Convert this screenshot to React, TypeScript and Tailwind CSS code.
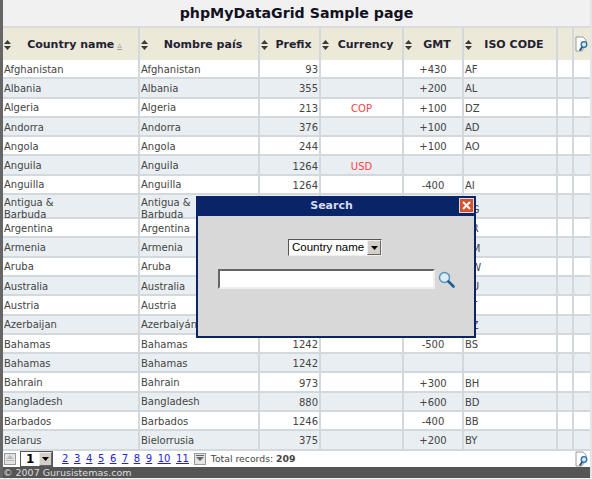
const rows = [
  ['Afghanistan', 'Afghanistan', '93', '', '+430', 'AF'],
  ['Albania', 'Albania', '355', '', '+200', 'AL'],
  ['Algeria', 'Algeria', '213', 'COP', '+100', 'DZ'],
  ['Andorra', 'Andorra', '376', '', '+100', 'AD'],
  ['Angola', 'Angola', '244', '', '+100', 'AO'],
  ['Anguila', 'Anguila', '1264', 'USD', '', ''],
  ['Anguilla', 'Anguilla', '1264', '', '-400', 'AI'],
  ['Antigua & Barbuda', 'Antigua & Barbuda', '1268', '', '-400', 'AG'],
  ['Argentina', 'Argentina', '54', '', '-300', 'AR'],
  ['Armenia', 'Armenia', '374', '', '+400', 'AM'],
  ['Aruba', 'Aruba', '297', '', '-400', 'AW'],
  ['Australia', 'Australia', '61', '', '+1000', 'AU'],
  ['Austria', 'Austria', '43', '', '+100', 'AT'],
  ['Azerbaijan', 'Azerbaiyán', '994', '', '+400', 'AZ'],
  ['Bahamas', 'Bahamas', '1242', '', '-500', 'BS'],
  ['Bahamas', 'Bahamas', '1242', '', '', ''],
  ['Bahrain', 'Bahrain', '973', '', '+300', 'BH'],
  ['Bangladesh', 'Bangladesh', '880', '', '+600', 'BD'],
  ['Barbados', 'Barbados', '1246', '', '-400', 'BB'],
  ['Belarus', 'Bielorrusia', '375', '', '+200', 'BY'],
];

const pages = ['2', '3', '4', '5', '6', '7', '8', '9', '10', '11'];

function SortArrows() {
  return (
    <svg width="7" height="10" viewBox="0 0 7 10" className="shrink-0">
      <path d="M3.5 0 7 4H0z M0 6h7L3.5 10z" fill="#3a3a3a" />
    </svg>
  );
}

function SearchDoc() {
  return (
    <svg width="14" height="16" viewBox="0 0 14 16">
      <path d="M1 1h7l3 3v5l-4 6H1z" fill="#fff" stroke="#9a9a9a" />
      <circle cx="9" cy="8.5" r="2.8" fill="#cfe6f5" stroke="#2b6ea3" strokeWidth="1.3" />
      <path d="M7.2 11 4.8 14.5" stroke="#1d4f7c" strokeWidth="2" />
    </svg>
  );
}

function PageArrow({ down }: { down?: boolean }) {
  return (
    <div className="flex h-[12px] w-[12px] items-center justify-center border border-[#9a9a9a] bg-[#e4e4e4]">
      <svg width="8" height="7" viewBox="0 0 8 7">
        {down ? (
          <path d="M0 0h8v1H0zM0 2h8L4 6z" fill="#666" />
        ) : (
          <path d="M4 0 8 4H0zM0 5h8v1H0z" fill="#bbb" />
        )}
      </svg>
    </div>
  );
}

function SelectArrow({ className }: { className: string }) {
  return (
    <span className={`flex h-full items-center justify-center border border-[#eee] border-b-[#666] border-r-[#666] bg-[#d4d0c8] ${className}`}>
      <svg width="7" height="4" viewBox="0 0 7 4">
        <path d="M0 0h7L3.5 4z" fill="#000" />
      </svg>
    </span>
  );
}

function HeaderCell({ label, arrow }: { label: string; arrow?: boolean }) {
  return (
    <div className="flex items-center gap-[2px] border-r-2 border-[#d3d8dc] pl-[1px] pr-[2px] pt-[2px]">
      <SortArrows />
      <span className="flex-1 whitespace-nowrap text-center text-[11px] font-bold text-[#222233]">
        {label}
        {arrow && <span className="ml-[3px] text-[9px] font-normal text-[#999] underline">▵</span>}
      </span>
    </div>
  );
}

const rowGrid = 'grid grid-cols-[137px_120px_61px_83px_60px_94px_16px_16px]';
const cell = 'border-r-2 border-[#d3d8dc] px-[1px] pt-[2px] flex items-center';

export default function App() {
  return (
    <div className="relative h-[479px] w-[592px] overflow-hidden bg-[#f1f1f1] font-['DejaVu_Sans',sans-serif] text-[10px] text-[#444]">
      <div className="flex h-[478px] flex-col border-l-[3px] border-r-[2px] border-[#666] border-r-[#e4e4e4]">
        <h1 className="flex h-[28px] shrink-0 items-center justify-center border-b-2 border-[#d9dcdf] pt-[1px] text-[14.2px] font-bold text-[#111122]">
          phpMyDataGrid Sample page
        </h1>

        <div className={`${rowGrid} h-[32px] shrink-0 bg-[#ece9d8]`}>
          <HeaderCell label="Country name" arrow />
          <HeaderCell label="Nombre país" />
          <HeaderCell label="Prefix" />
          <HeaderCell label="Currency" />
          <HeaderCell label="GMT" />
          <HeaderCell label="ISO CODE" />
          <div className="border-r-2 border-[#d3d8dc]" />
          <div className="flex items-center justify-center">
            <SearchDoc />
          </div>
        </div>

        <div className="flex shrink-0 flex-col">
          {rows.map((r, i) => (
            <div
              key={i}
              className={`${rowGrid} shrink-0 border-b-2 border-[#d3d8dc] ${i === 7 ? 'h-[24px]' : 'h-[19.3px]'} ${i % 2 ? 'bg-[#e9eef2]' : 'bg-white'}`}
            >
              <div className={`${cell} pr-[60px] leading-[12px]`}>{r[0]}</div>
              <div className={`${cell} pr-[50px] leading-[12px]`}>{r[1]}</div>
              <div className={`${cell} justify-end`}>{r[2]}</div>
              <div className={`${cell} justify-center text-[#ff4040]`}>{r[3]}</div>
              <div className={`${cell} justify-center`}>{r[4]}</div>
              <div className={cell}>{r[5]}</div>
              <div className={cell} />
              <div />
            </div>
          ))}
        </div>

        <div className="flex min-h-0 flex-1 items-center bg-white">
          <div className="ml-[1px]">
            <PageArrow />
          </div>
          <div className="ml-[4px] flex h-[16px] w-[33px] items-center justify-between border border-[#555] bg-white pl-[5px] text-[12px] font-bold leading-none text-black">
            1
            <SelectArrow className="w-[13px]" />
          </div>
          <div className="ml-[8px] flex gap-[3.6px] text-[#2222dd] underline">
            {pages.map((p) => (
              <a key={p} href="#" className="px-[1px]">
                {p}
              </a>
            ))}
          </div>
          <div className="ml-[4px]">
            <PageArrow down />
          </div>
          <span className="ml-[5px] text-[9.3px]">
            Total records: <b>209</b>
          </span>
          <div className="ml-auto mr-[1px] flex">
            <SearchDoc />
          </div>
        </div>
        <div className="flex h-[11px] shrink-0 items-center bg-[#555] text-[9.5px] leading-none text-[#ddd]">
          © 2007 Gurusistemas.com
        </div>
      </div>

      <div className="absolute left-[196px] top-[196px] flex h-[142px] w-[280px] flex-col border-2 border-[#0a2468] bg-[#d8d8d8]">
        <div className="relative flex h-[18px] shrink-0 items-center justify-center bg-[#0a2468] pb-[2px] pr-[9px] text-[11px] font-bold text-[#d5dcf0]">
          Search
          <div className="absolute right-0 top-0 flex h-[15px] w-[15px] items-center justify-center border border-[#ddd] bg-[#d9502c]">
            <svg width="9" height="9" viewBox="0 0 9 9">
              <path d="M1 1l7 7M8 1 1 8" stroke="#fff" strokeWidth="2" />
            </svg>
          </div>
        </div>
        <div className="mt-[23px] flex justify-center pr-[2px]">
          <div className="flex h-[17px] w-[94px] items-center justify-between border border-[#555] border-b-[#eee] border-r-[#eee] bg-white pl-[3px] font-['Liberation_Sans',sans-serif] text-[11.5px] leading-none text-black">
            Country name
            <SelectArrow className="w-[14px]" />
          </div>
        </div>
        <div className="mt-[13px] flex items-center pl-[20px]">
          <input
            type="text"
            className="h-[20px] w-[217px] border-2 border-[#666] border-b-[#eee] border-r-[#eee] bg-white"
          />
          <svg width="17" height="17" viewBox="0 0 17 17" className="ml-[3px]">
            <circle cx="6.5" cy="6.5" r="5" fill="#d9ecf8" stroke="#5a8fb5" strokeWidth="1.4" />
            <path d="M10.5 10.5 15.5 15.5" stroke="#1f5f8f" strokeWidth="2.6" strokeLinecap="round" />
          </svg>
        </div>
      </div>
    </div>
  );
}
